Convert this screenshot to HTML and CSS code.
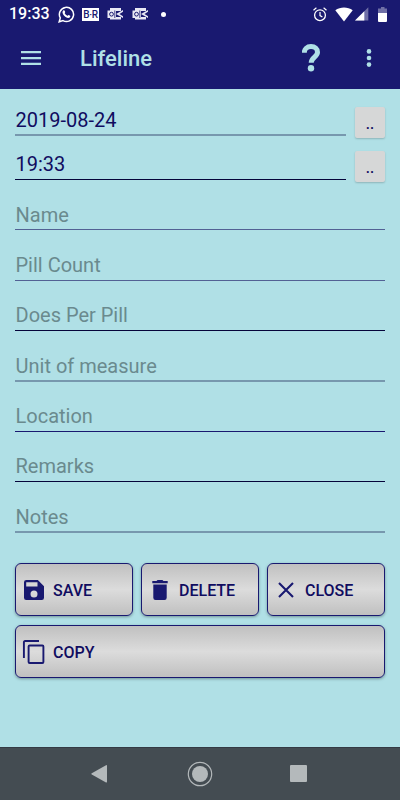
FILE: index.html
```html
<!DOCTYPE html>
<html lang="en">
<head>
    <meta charset="UTF-8">
    <meta name="viewport" content="width=device-width, initial-scale=1.0">
    <title>Lifeline</title>
    <link rel="stylesheet" href="styles.css">
</head>
<body>
    <header>
        <div class="status-bar">
            <span class="clock">19:33</span>
            <svg class="whatsapp" width="17" height="17" viewBox="0 0 17 17">
                <path d="M1.2 15.8l1.1-3.9a7.1 7.1 0 1 1 2.7 2.7z" fill="none" stroke="#fff" stroke-width="1.5"/>
                <path d="M5.2 4.6c.6-.6 1.2-.5 1.5.2l.5 1.2c.1.4-.6 1-.5 1.2.6 1.2 1.5 2 2.7 2.5.3.1.8-.9 1.2-.8l1.5.8c.5.3 0 1.4-.5 1.8-1 .7-2.4.4-4-.6C5.9 9.800 4.800 8.300 4.500 6.800c-.1-.8.2-1.700.7-2.200z" fill="#fff"/>
            </svg>
            <span class="news">B&middot;R</span>
            <svg class="mail" width="17" height="14" viewBox="0 0 17 14">
                <path d="M3 1h11v3H9v6h5v2.500H3V11H.5V3.500H3z" fill="#e8e8f4"/>
                <circle cx="4.500" cy="7.200" r="1.900" fill="none" stroke="#191970" stroke-width="1"/>
                <path d="M7.800 3.500v7.500" stroke="#191970" stroke-width=".8"/>
                <path d="M9 7l7-4v8z" fill="#e8e8f4"/>
                <path d="M16 4.800v4.400L12.500 7z" fill="#191970"/>
            </svg>
            <svg class="mail" width="17" height="14" viewBox="0 0 17 14">
                <path d="M3 1h11v3H9v6h5v2.500H3V11H.5V3.500H3z" fill="#e8e8f4"/>
                <circle cx="4.500" cy="7.200" r="1.900" fill="none" stroke="#191970" stroke-width="1"/>
                <path d="M7.800 3.500v7.500" stroke="#191970" stroke-width=".8"/>
                <path d="M9 7l7-4v8z" fill="#e8e8f4"/>
                <path d="M16 4.800v4.400L12.500 7z" fill="#191970"/>
            </svg>
            <span class="more-dot"></span>
            <svg class="alarm" width="14" height="15" viewBox="0 0 14 15" fill="none" stroke="#fff">
                <circle cx="7" cy="8.200" r="5.400" stroke-width="1.300"/>
                <path d="M7 5v3.600l2.400 1.500M.5 3.200L3.400.8M13.500 3.200L10.600.8" stroke-width="1.200"/>
            </svg>
            <svg class="wifi" width="18" height="15" viewBox="0 0 18 15"><path d="M9 14.500L.3 3.200C5.300-.4 12.700-.4 17.700 3.200z" fill="#fff"/></svg>
            <svg class="signal" width="14" height="14" viewBox="0 0 14 14">
                <path d="M0 13.500L13.300.3v13.200z" fill="#6f6fa6"/>
                <path d="M0 13.500L9.300 4.300v9.200z" fill="#fff"/>
            </svg>
            <svg class="battery" width="9" height="15" viewBox="0 0 9 15">
                <path d="M0 1.500h3V0h3.500v1.500H9V6H0z" fill="#6f6fa6"/>
                <path d="M0 6h9v8q0 1-1 1H1q-1 0-1-1z" fill="#fff"/>
            </svg>
        </div>
        <div class="app-bar">
            <svg class="menu" width="20" height="14" viewBox="0 0 20 14" fill="#b0e0e6">
                <path d="M0 0h20v2.300H0zM0 5.900h20v2.300H0zM0 11.700h20V14H0z"/>
            </svg>
            <h1>Lifeline</h1>
            <svg class="help" width="18" height="28" viewBox="0 0 18 28">
                <path d="M2.300 8.800C2.300 4.900 5 2.600 9 2.600s6.500 2.200 6.500 5.600c0 4.600-6.300 5.300-6.300 10.600" fill="none" stroke="#b0e0e6" stroke-width="5"/>
                <circle cx="9" cy="24.200" r="3.200" fill="#b0e0e6"/>
            </svg>
            <svg class="dots" width="6" height="18" viewBox="0 0 6 18" fill="#b0e0e6">
                <circle cx="3" cy="2.400" r="2.300"/><circle cx="3" cy="9" r="2.300"/><circle cx="3" cy="15.600" r="2.300"/>
            </svg>
        </div>
    </header>

    <main>
        <div class="row date">
            <div class="field value soft">2019-08-24</div>
            <button class="pick">..</button>
        </div>
        <div class="row time">
            <div class="field value">19:33</div>
            <button class="pick">..</button>
        </div>
        <div class="field mid name">Name</div>
        <div class="field mid count">Pill Count</div>
        <div class="field does">Does Per Pill</div>
        <div class="field soft unit">Unit of measure</div>
        <div class="field navy location">Location</div>
        <div class="field remarks">Remarks</div>
        <div class="field soft notes">Notes</div>

        <div class="actions">
            <button class="action">
                <svg width="24" height="24" viewBox="0 0 24 24"><path d="M15.800 2H4.400Q2 2 2 4.200v15.600Q2 22 4.200 22h15.600q2.200 0 2.200-2.200V8.200zM12 19.500a3.500 3.500 0 1 1 0-7 3.500 3.500 0 0 1 0 7zM15.500 8.600H4.200V4.200h11.300z" fill="#191970" fill-rule="evenodd"/></svg>
                <span>SAVE</span>
            </button>
            <button class="action">
                <svg width="24" height="24" viewBox="0 0 24 24"><path d="M5.300 6.500h13.400v13.300q0 2.200-2.200 2.200h-9q-2.200 0-2.200-2.200zM4.300 3.100h4.200L9.600 2h4.800l1.100 1.100h4.200v2.100H4.300z" fill="#191970"/></svg>
                <span>DELETE</span>
            </button>
            <button class="action">
                <svg width="24" height="24" viewBox="0 0 24 24"><path d="M5 5l14 14M19 5L5 19" fill="none" stroke="#191970" stroke-width="2.100"/></svg>
                <span>CLOSE</span>
            </button>
            <button class="action wide">
                <svg width="24" height="24" viewBox="0 0 24 24" fill="none" stroke="#191970" stroke-width="1.900"><path d="M1.900 18V2.200q0-1.200 1.200-1.200H17"/><rect x="6.600" y="5.500" width="14.800" height="17.500" rx="1"/></svg>
                <span>COPY</span>
            </button>
        </div>
    </main>

    <footer>
        <svg width="17" height="20" viewBox="0 0 17 20"><path d="M.8 9.300L15 1.200q1-.5 1 .6v16q0 1.100-1 .6L.8 10.500q-1-.6 0-1.200z" fill="#b4b9bb"/></svg>
        <svg class="home" width="26" height="26" viewBox="0 0 26 26"><circle cx="13" cy="13" r="11.700" fill="none" stroke="#b4b9bb" stroke-width="1.200"/><circle cx="13" cy="13" r="8" fill="#b4b9bb"/></svg>
        <span class="recent"></span>
    </footer>
</body>
</html>
```
FILE: styles.css
```css
/* General */
* { box-sizing: border-box; }
body { margin: 0; height: 800px; display: flex; flex-direction: column; background: #b0e0e6; font-family: Roboto, sans-serif; color: #191970; overflow: hidden; }
svg { display: block; flex: none; }

/* Header */
header { height: 89px; background: #191970; }
.status-bar { height: 28px; display: flex; align-items: center; color: #fff; padding: 0 13px 0 9px; }
.clock { width: 39px; font-size: 16px; font-weight: 500; line-height: 28px; }
.whatsapp { margin-left: 10px; }
.news { width: 17px; height: 13px; margin-left: 7px; background: #fff; color: #191970; font-size: 10px; font-weight: 500; line-height: 13px; text-align: center; letter-spacing: -0.3px; }
.mail { margin-left: 8px; }
.more-dot { width: 5px; height: 5px; margin-left: 12px; border-radius: 50%; background: #fff; }
.alarm { margin-left: auto; }
.wifi { margin-left: 8px; }
.signal { margin-left: 2px; }
.battery { margin-left: 9px; }

/* App Bar */
.app-bar { height: 60px; display: flex; align-items: center; padding: 0 28px 0 21px; }
h1 { margin: 0 0 0 39px; font-size: 22px; font-weight: 500; line-height: 32px; padding-top: 1px; color: #b0e0e6; }
.help { margin-left: auto; }
.dots { margin-left: 46px; }

/* Form */
main { flex: 1; padding: 12px 15px 0; }
.row { display: flex; justify-content: space-between; }
.date { height: 44px; }
.time { height: 44px; }
.field { height: 36px; padding-left: 0.5px; border-bottom: 1px solid #05053a; font-size: 20px; line-height: 40px; color: #6a8a8e; white-space: nowrap; }
.value { color: #100c60; }
.mid { border-bottom-color: #526194; }
.navy { border-bottom-color: #191970; }
.soft { height: 37px; border-bottom: 2px solid #7798ae; line-height: 42px; }
.name { margin-top: 5px; line-height: 42px; }
.count { margin-top: 15px; }
.does, .unit, .location, .remarks, .notes { margin-top: 14px; }
.row .field { width: 331px; height: 35px; line-height: 39px; }
.date .field { line-height: 38px; }
.pick { width: 30px; height: 31px; margin-top: 6px; padding: 2px 0 0; border: 0; border-radius: 2px; background: #d6d7d7; box-shadow: 0 1px 2px rgba(0, 0, 0, 0.2); font: 500 15px Roboto, sans-serif; color: #100c60; }

/* Buttons */
.actions { display: grid; grid-template-columns: repeat(3, 1fr); gap: 9px 8px; margin-top: 30px; }
.action { display: flex; align-items: center; height: 53px; padding: 0 6px; border: 1px solid #191970; border-radius: 6px; background: linear-gradient(#c0c0c0, #dcdcdc 50%, #c0c0c0); box-shadow: 0 1px 3px rgba(0, 0, 0, 0.35); font: 500 16px Roboto, sans-serif; color: #100c60; }
.action span { margin-left: 7px; padding-top: 1px; }
.wide { grid-column: 1 / -1; }

/* Navigation */
footer { height: 53px; display: flex; align-items: center; justify-content: space-between; padding: 0 93px 1px 91px; background: #444c52; border-top: 1px solid #343b44; }
.home { margin-left: 2px; }
.recent { width: 17px; height: 17px; border-radius: 1px; background: #b4b9bb; }
```
